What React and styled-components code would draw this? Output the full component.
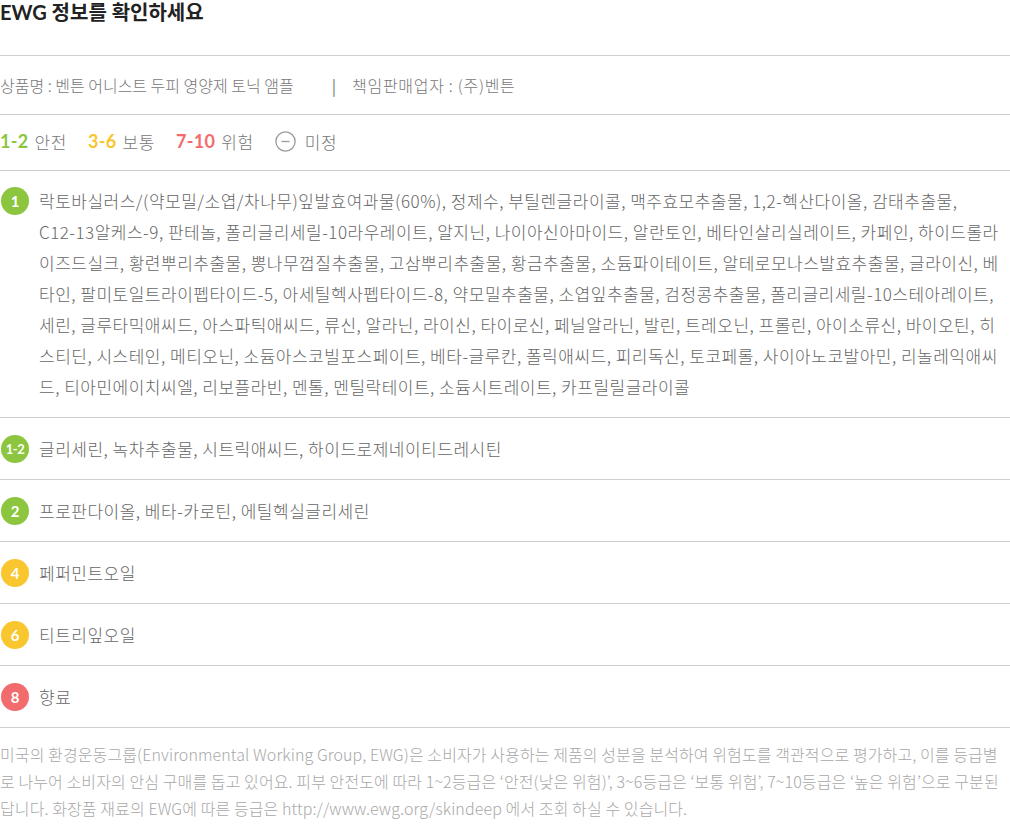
import styled, { createGlobalStyle } from "styled-components";

const GlobalStyle = createGlobalStyle`
  html, body {
    margin: 0;
    padding: 0;
    background: #fff;
  }
  body {
    font-family: "Noto Sans CJK KR", "Noto Sans", sans-serif;
  }
`;

const COLORS = {
  safe: "#8cc63f",
  normal: "#f9c62f",
  danger: "#f26b6d",
};

const Page = styled.div`
  width: 1010px;
  color: #666;
`;

const Title = styled.h1`
  margin: 0;
  height: 56px;
  box-sizing: border-box;
  font-size: 20px;
  line-height: 24px;
  font-weight: 700;
  color: #222;
  font-family: Lato, "Noto Sans CJK KR", sans-serif;
  border-bottom: 1px solid #cfcfcf;
`;

const InfoRow = styled.div`
  height: 59px;
  box-sizing: border-box;
  display: flex;
  align-items: center;
  font-size: 16px;
  font-weight: 300;
  color: #777;
  border-bottom: 1px solid #cfcfcf;
`;

const Bar = styled.span`
  margin: 0 16px 0 38px;
  color: #777;
  font-weight: 400;
`;

const Seller = styled.span`
  letter-spacing: 0.7px;
`;

const Legend = styled.div`
  height: 56px;
  box-sizing: border-box;
  padding-bottom: 3px;
  display: flex;
  align-items: center;
  gap: 21px;
  border-bottom: 1px solid #cfcfcf;
`;

const LegendItem = styled.div`
  display: flex;
  align-items: center;
  gap: ${(p) => (p.icon ? "9px" : "6px")};
  font-size: 17px;
  font-weight: 300;
  color: #777;
  letter-spacing: 0.6px;
`;

const Range = styled.span`
  font-family: Lato, sans-serif;
  font-weight: 700;
  font-size: 18px;
  letter-spacing: 0.3px;
  color: ${(p) => p.color};
`;

const Ingredients = styled.ul`
  list-style: none;
  margin: 0;
  padding: 0;
`;

const Row = styled.li`
  display: flex;
  align-items: ${(p) => (p.multi ? "flex-start" : "center")};
  gap: 10px;
  padding: ${(p) => (p.multi ? "14px 0 15px" : "0")};
  min-height: 62px;
  box-sizing: border-box;
  border-bottom: 1px solid #cfcfcf;
`;

const Badge = styled.span`
  flex: none;
  width: 28px;
  height: 28px;
  margin-left: 1px;
  margin-top: ${(p) => (p.multi ? "2px" : "0")};
  border-radius: 50%;
  background: ${(p) => p.color};
  color: #fff;
  display: flex;
  align-items: center;
  justify-content: center;
  font-family: Lato, sans-serif;
  font-weight: 700;
  font-size: ${(p) => (p.small ? "13px" : "15px")};
  letter-spacing: ${(p) => (p.small ? "-0.5px" : "0")};
`;

const Names = styled.p`
  margin: 0;
  flex: 1;
  padding-right: 4px;
  font-size: 17px;
  font-weight: 300;
  line-height: 31px;
  color: #666;
  letter-spacing: 0.5px;
`;

const NoWrap = styled.span`
  white-space: nowrap;
`;

const Note = styled.p`
  margin: 0;
  padding: 13px 4px 0 0;
  font-size: 16px;
  line-height: 27px;
  font-weight: 300;
  color: #a8a8a8;
  letter-spacing: 0.1px;
`;

const MinusIcon = () => (
  <svg width="21" height="21" viewBox="0 0 21 21">
    <circle cx="10.5" cy="10.5" r="9.6" fill="none" stroke="#999" strokeWidth="1.3" />
    <line x1="6.5" y1="10.5" x2="14.5" y2="10.5" stroke="#999" strokeWidth="1.3" />
  </svg>
);

// keep a latin code glued to the hangul that follows it ("C12-13알케스")
const GLUED = "C12-13알";
const renderNames = (text) =>
  text.split(GLUED).flatMap((part, i) =>
    i === 0 ? [part] : [<NoWrap key={i}>{GLUED}</NoWrap>, part]
  );

const rows = [
  {
    grade: "1",
    color: COLORS.safe,
    text: "락토바실러스/(약모밀/소엽/차나무)잎발효여과물(60%), 정제수, 부틸렌글라이콜, 맥주효모추출물, 1,2-헥산다이올, 감태추출물, C12-13알케스-9, 판테놀, 폴리글리세릴-10라우레이트, 알지닌, 나이아신아마이드, 알란토인, 베타인살리실레이트, 카페인, 하이드롤라이즈드실크, 황련뿌리추출물, 뽕나무껍질추출물, 고삼뿌리추출물, 황금추출물, 소듐파이테이트, 알테로모나스발효추출물, 글라이신, 베타인, 팔미토일트라이펩타이드-5, 아세틸헥사펩타이드-8, 약모밀추출물, 소엽잎추출물, 검정콩추출물, 폴리글리세릴-10스테아레이트, 세린, 글루타믹애씨드, 아스파틱애씨드, 류신, 알라닌, 라이신, 타이로신, 페닐알라닌, 발린, 트레오닌, 프롤린, 아이소류신, 바이오틴, 히스티딘, 시스테인, 메티오닌, 소듐아스코빌포스페이트, 베타-글루칸, 폴릭애씨드, 피리독신, 토코페롤, 사이아노코발아민, 리놀레익애씨드, 티아민에이치씨엘, 리보플라빈, 멘톨, 멘틸락테이트, 소듐시트레이트, 카프릴릴글라이콜",
  },
  { grade: "1-2", color: COLORS.safe, text: "글리세린, 녹차추출물, 시트릭애씨드, 하이드로제네이티드레시틴" },
  { grade: "2", color: COLORS.safe, text: "프로판다이올, 베타-카로틴, 에틸헥실글리세린" },
  { grade: "4", color: COLORS.normal, text: "페퍼민트오일" },
  { grade: "6", color: COLORS.normal, text: "티트리잎오일" },
  { grade: "8", color: COLORS.danger, text: "향료" },
];

export default function App() {
  return (
    <Page>
      <GlobalStyle />
      <Title>EWG 정보를 확인하세요</Title>
      <InfoRow>
        상품명 : 벤튼 어니스트 두피 영양제 토닉 앰플
        <Bar>|</Bar>
        <Seller>책임판매업자 : (주)벤튼</Seller>
      </InfoRow>
      <Legend>
        <LegendItem>
          <Range color={COLORS.safe}>1-2</Range>안전
        </LegendItem>
        <LegendItem>
          <Range color={COLORS.normal}>3-6</Range>보통
        </LegendItem>
        <LegendItem>
          <Range color={COLORS.danger}>7-10</Range>위험
        </LegendItem>
        <LegendItem icon>
          <MinusIcon />미정
        </LegendItem>
      </Legend>
      <Ingredients>
        {rows.map((r, i) => {
          const multi = i === 0;
          return (
            <Row key={r.grade} multi={multi}>
              <Badge color={r.color} multi={multi} small={r.grade.length > 1}>
                {r.grade}
              </Badge>
              <Names>{renderNames(r.text)}</Names>
            </Row>
          );
        })}
      </Ingredients>
      <Note>
        미국의 환경운동그룹(Environmental Working Group, EWG)은 소비자가 사용하는 제품의 성분을 분석하여 위험도를 객관적으로 평가하고, 이를 등급별로 나누어 소비자의 안심 구매를 돕고 있어요. 피부 안전도에 따라 1~2등급은 ‘안전(낮은 위험)’, 3~6등급은 ‘보통 위험’, 7~10등급은 ‘높은 위험’으로 구분된답니다. 화장품 재료의 EWG에 따른 등급은 http://www.ewg.org/skindeep 에서 조회 하실 수 있습니다.
      </Note>
    </Page>
  );
}
